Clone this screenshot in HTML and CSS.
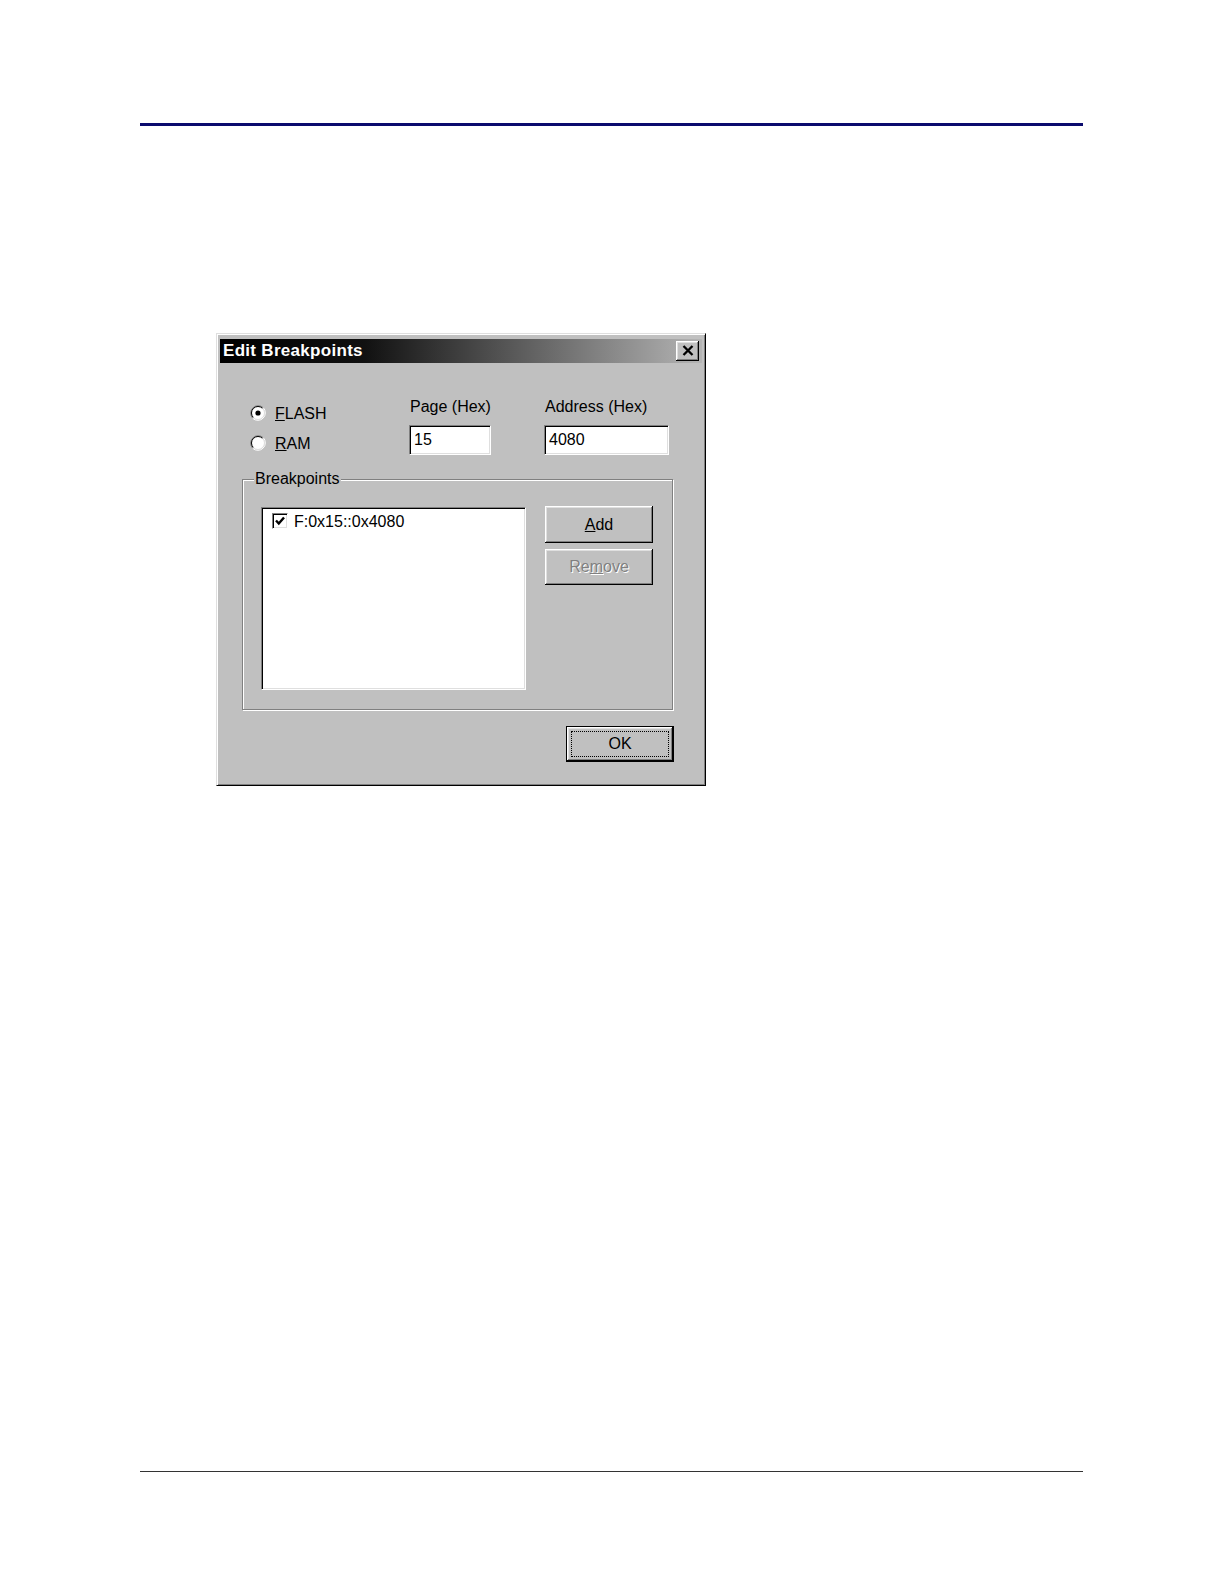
FILE: index.html
```html
<!DOCTYPE html>
<html>
<head>
<meta charset="utf-8">
<title>Edit Breakpoints</title>
<link rel="stylesheet" href="styles.css">
</head>
<body>
<div class="page">
  <div class="top-rule"></div>

  <div class="dialog">
    <div class="titlebar">
      <span class="title">Edit Breakpoints</span>
      <span class="close-btn">
        <svg width="12" height="11" viewBox="0 0 12 11"><path d="M1.5 1 L10.5 10 M10.5 1 L1.5 10" stroke="#000" stroke-width="2.3" fill="none"/></svg>
      </span>
    </div>

    <div class="top-section">
      <div class="radio-col">
        <div class="radio-row">
          <svg class="radio" width="16" height="16" viewBox="0 0 16 16">
            <circle cx="8" cy="8" r="6.5" fill="#fff"/>
            <path d="M2.7 13.3 A7.5 7.5 0 0 1 13.3 2.7" stroke="#808080" fill="none"/>
            <path d="M13.3 2.7 A7.5 7.5 0 0 1 2.7 13.3" stroke="#fff" fill="none"/>
            <path d="M3.4 12.6 A6.5 6.5 0 0 1 12.6 3.4" stroke="#000" fill="none"/>
            <path d="M12.6 3.4 A6.5 6.5 0 0 1 3.4 12.6" stroke="#dfdfdf" fill="none"/>
            <circle cx="8" cy="8" r="2.6" fill="#000"/>
          </svg>
          <span class="label"><u>F</u>LASH</span>
        </div>
        <div class="radio-row">
          <svg class="radio" width="16" height="16" viewBox="0 0 16 16">
            <circle cx="8" cy="8" r="6.5" fill="#fff"/>
            <path d="M2.7 13.3 A7.5 7.5 0 0 1 13.3 2.7" stroke="#808080" fill="none"/>
            <path d="M13.3 2.7 A7.5 7.5 0 0 1 2.7 13.3" stroke="#fff" fill="none"/>
            <path d="M3.4 12.6 A6.5 6.5 0 0 1 12.6 3.4" stroke="#000" fill="none"/>
            <path d="M12.6 3.4 A6.5 6.5 0 0 1 3.4 12.6" stroke="#dfdfdf" fill="none"/>
          </svg>
          <span class="label"><u>R</u>AM</span>
        </div>
      </div>
      <div class="field-col page-col">
        <div class="field-label">Page (Hex)</div>
        <div class="textbox page-box">15</div>
      </div>
      <div class="field-col addr-col">
        <div class="field-label">Address (Hex)</div>
        <div class="textbox addr-box">4080</div>
      </div>
    </div>

    <div class="group">
      <div class="group-title">Breakpoints</div>
      <div class="group-body">
        <div class="listbox">
          <div class="list-item">
            <span class="checkbox">
              <svg width="12" height="12" viewBox="0 0 12 12"><path d="M2 5.5 L4.8 8.5 L10 2.5" stroke="#000" stroke-width="2.4" fill="none"/></svg>
            </span>
            <span class="item-text">F:0x15::0x4080</span>
          </div>
        </div>
        <div class="btn-col">
          <div class="btn add-btn"><u>A</u>dd</div>
          <div class="btn remove-btn disabled">Re<u>m</u>ove</div>
        </div>
      </div>
    </div>

    <div class="ok-row">
      <div class="btn ok-btn"><span class="focus">OK</span></div>
    </div>
  </div>

  <div class="bottom-rule"></div>
</div>
</body>
</html>
```

FILE: styles.css
```css
html, body {
  margin: 0;
  padding: 0;
  background: #fff;
}
.page {
  width: 1224px;
  height: 1584px;
  overflow: hidden;
  display: flex;
  flex-direction: column;
  font-family: "Liberation Sans", Arial, sans-serif;
  font-size: 16px;
  color: #000;
}
.top-rule {
  margin: 123px 0 0 140px;
  width: 943px;
  height: 3px;
  background: #0b0b6e;
}
.bottom-rule {
  margin: 685px 0 0 140px;
  width: 943px;
  height: 1px;
  background: #333;
}

/* dialog window */
.dialog {
  margin: 207px 0 0 216px;
  width: 490px;
  height: 453px;
  box-sizing: border-box;
  background: #c0c0c0;
  border: 1px solid;
  border-color: #dfdfdf #000 #000 #dfdfdf;
  box-shadow: inset 1px 1px 0 #fff, inset -1px -1px 0 #808080;
  padding: 5px 3px 3px 3px;
  display: flex;
  flex-direction: column;
}
.titlebar {
  height: 24px;
  flex: none;
  background: linear-gradient(90deg, #000 0%, #111 30%, #b4b4b4 100%);
  display: flex;
  align-items: center;
  justify-content: space-between;
  padding-left: 3px;
}
.title {
  color: #fff;
  font-weight: bold;
  font-size: 17px;
  letter-spacing: 0.3px;
  line-height: 20px;
}
.close-btn {
  width: 23px;
  height: 20px;
  margin-right: 3px;
  box-sizing: border-box;
  background: #c0c0c0;
  box-shadow: inset -1px -1px 0 #000, inset 1px 1px 0 #fff, inset -2px -2px 0 #808080, inset 2px 2px 0 #dfdfdf;
  display: flex;
  align-items: center;
  justify-content: center;
  padding-bottom: 1px;
}

/* top section */
.top-section {
  display: flex;
  height: 93px;
  flex: none;
  padding-left: 30px;
}
.radio-col {
  width: 159px;
  padding-top: 42px;
  display: flex;
  flex-direction: column;
  gap: 14px;
}
.radio-row {
  display: flex;
  align-items: center;
  height: 16px;
}
.radio {
  flex: none;
  margin-right: 9px;
}
.label {
  line-height: 18px;
  margin-top: 2px;
}
.field-col {
  padding-top: 35px;
}
.page-col {
  width: 135px;
}
.field-label {
  line-height: 18px;
  margin: 0 0 9px 1px;
}
.textbox {
  height: 30px;
  box-sizing: border-box;
  background: #fff;
  border: 1px solid;
  border-color: #808080 #fff #fff #808080;
  box-shadow: inset 1px 1px 0 #000, inset -1px -1px 0 #dfdfdf;
  padding-left: 4px;
  line-height: 28px;
}
.page-box {
  width: 82px;
}
.addr-box {
  width: 125px;
}

/* group box */
.group {
  margin: 23px 0 0 22px;
  width: 431px;
  height: 231px;
  flex: none;
  box-sizing: border-box;
  border: 1px solid #808080;
  box-shadow: inset 1px 1px 0 #fff, 1px 1px 0 #fff;
}
.group-title {
  width: fit-content;
  margin: -10px 0 0 11px;
  padding: 0 1px;
  line-height: 18px;
  background: #c0c0c0;
}
.group-body {
  display: flex;
  padding: 19px 0 0 18px;
}
.listbox {
  width: 265px;
  height: 183px;
  box-sizing: border-box;
  background: #fff;
  border: 1px solid;
  border-color: #808080 #fff #fff #808080;
  box-shadow: inset 1px 1px 0 #000, inset -1px -1px 0 #dfdfdf;
  padding: 5px 0 0 10px;
}
.list-item {
  display: flex;
  align-items: center;
  height: 16px;
}
.checkbox {
  width: 16px;
  height: 16px;
  box-sizing: border-box;
  background: #fff;
  border: 1px solid;
  border-color: #808080 #fff #fff #808080;
  box-shadow: inset 1px 1px 0 #000, inset -1px -1px 0 #dfdfdf;
  display: flex;
  align-items: center;
  justify-content: center;
  flex: none;
}
.item-text {
  margin-left: 6px;
  line-height: 18px;
  margin-top: 2px;
}
.btn-col {
  margin-left: 19px;
  margin-top: -1px;
  display: flex;
  flex-direction: column;
  gap: 6px;
}
.btn {
  width: 108px;
  box-sizing: border-box;
  background: #c0c0c0;
  box-shadow: inset -1px -1px 0 #000, inset 1px 1px 0 #fff, inset -2px -2px 0 #808080, inset 2px 2px 0 #dfdfdf;
  display: flex;
  align-items: center;
  justify-content: center;
  line-height: 18px;
}
.add-btn {
  height: 37px;
}
.remove-btn {
  height: 36px;
}
.disabled {
  color: #808080;
  text-shadow: 1px 1px 0 #fff;
}

/* OK */
.ok-row {
  margin: 16px 0 0 346px;
}
.ok-btn {
  height: 36px;
  border: 1px solid #000;
  box-shadow: inset -1px -1px 0 #000, inset 1px 1px 0 #fff, inset -2px -2px 0 #808080, inset 2px 2px 0 #dfdfdf;
  padding: 4px;
}
.focus {
  flex: 1;
  align-self: stretch;
  border: 1px dotted #000;
  display: flex;
  align-items: center;
  justify-content: center;
}
```
